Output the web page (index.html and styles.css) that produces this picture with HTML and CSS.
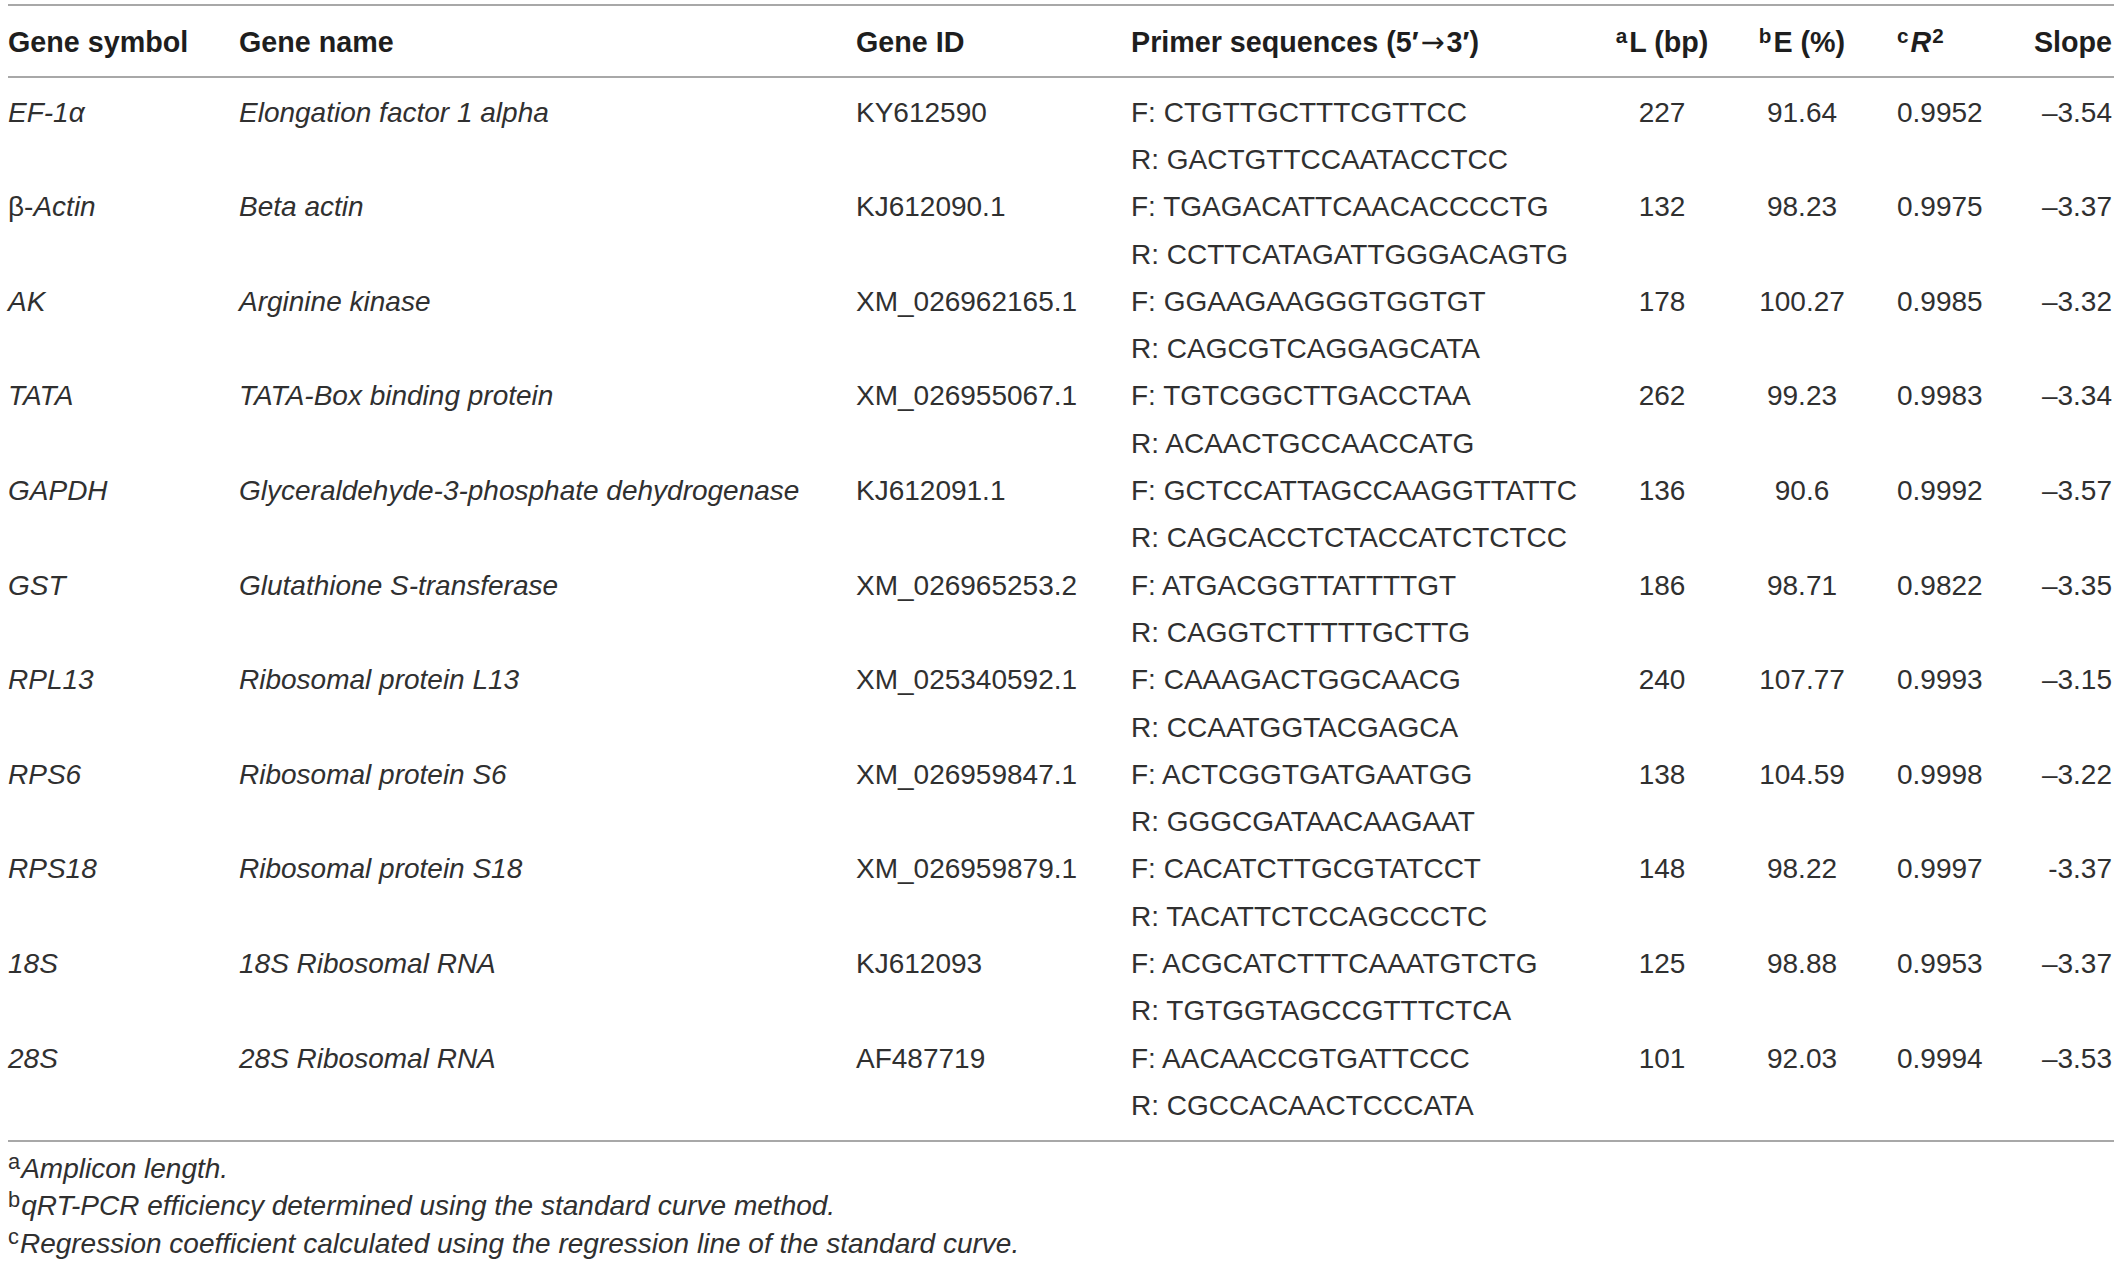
FILE: index.html
```html
<!DOCTYPE html>
<html>
<head>
<meta charset="utf-8">
<link rel="stylesheet" href="styles.css">
</head>
<body>
<div class="tbl">
  <div class="row head">
    <div class="c">Gene symbol</div>
    <div class="c">Gene name</div>
    <div class="c">Gene ID</div>
    <div class="c">Primer sequences (5′<span class="arr">→</span>3′)</div>
    <div class="c ctr"><sup>a</sup>L (bp)</div>
    <div class="c ctr"><sup>b</sup>E (%)</div>
    <div class="c r2"><sup>c</sup><i>R</i><sup class="sq">2</sup></div>
    <div class="c rt">Slope</div>
  </div>
  <div class="body">
    <div class="row"><div class="c it">EF-1α</div><div class="c it">Elongation factor 1 alpha</div><div class="c">KY612590</div><div class="c">F: CTGTTGCTTTCGTTCC<br>R: GACTGTTCCAATACCTCC</div><div class="c ctr">227</div><div class="c ctr">91.64</div><div class="c r2">0.9952</div><div class="c rt">–3.54</div></div>
    <div class="row"><div class="c">β-<i>Actin</i></div><div class="c it">Beta actin</div><div class="c">KJ612090.1</div><div class="c">F: TGAGACATTCAACACCCCTG<br>R: CCTTCATAGATTGGGACAGTG</div><div class="c ctr">132</div><div class="c ctr">98.23</div><div class="c r2">0.9975</div><div class="c rt">–3.37</div></div>
    <div class="row"><div class="c it">AK</div><div class="c it">Arginine kinase</div><div class="c">XM_026962165.1</div><div class="c">F: GGAAGAAGGGTGGTGT<br>R: CAGCGTCAGGAGCATA</div><div class="c ctr">178</div><div class="c ctr">100.27</div><div class="c r2">0.9985</div><div class="c rt">–3.32</div></div>
    <div class="row"><div class="c it">TATA</div><div class="c it">TATA-Box binding protein</div><div class="c">XM_026955067.1</div><div class="c">F: TGTCGGCTTGACCTAA<br>R: ACAACTGCCAACCATG</div><div class="c ctr">262</div><div class="c ctr">99.23</div><div class="c r2">0.9983</div><div class="c rt">–3.34</div></div>
    <div class="row"><div class="c it">GAPDH</div><div class="c it">Glyceraldehyde-3-phosphate dehydrogenase</div><div class="c">KJ612091.1</div><div class="c">F: GCTCCATTAGCCAAGGTTATTC<br>R: CAGCACCTCTACCATCTCTCC</div><div class="c ctr">136</div><div class="c ctr">90.6</div><div class="c r2">0.9992</div><div class="c rt">–3.57</div></div>
    <div class="row"><div class="c it">GST</div><div class="c it">Glutathione S-transferase</div><div class="c">XM_026965253.2</div><div class="c">F: ATGACGGTTATTTTGT<br>R: CAGGTCTTTTTGCTTG</div><div class="c ctr">186</div><div class="c ctr">98.71</div><div class="c r2">0.9822</div><div class="c rt">–3.35</div></div>
    <div class="row"><div class="c it">RPL13</div><div class="c it">Ribosomal protein L13</div><div class="c">XM_025340592.1</div><div class="c">F: CAAAGACTGGCAACG<br>R: CCAATGGTACGAGCA</div><div class="c ctr">240</div><div class="c ctr">107.77</div><div class="c r2">0.9993</div><div class="c rt">–3.15</div></div>
    <div class="row"><div class="c it">RPS6</div><div class="c it">Ribosomal protein S6</div><div class="c">XM_026959847.1</div><div class="c">F: ACTCGGTGATGAATGG<br>R: GGGCGATAACAAGAAT</div><div class="c ctr">138</div><div class="c ctr">104.59</div><div class="c r2">0.9998</div><div class="c rt">–3.22</div></div>
    <div class="row"><div class="c it">RPS18</div><div class="c it">Ribosomal protein S18</div><div class="c">XM_026959879.1</div><div class="c">F: CACATCTTGCGTATCCT<br>R: TACATTCTCCAGCCCTC</div><div class="c ctr">148</div><div class="c ctr">98.22</div><div class="c r2">0.9997</div><div class="c rt">-3.37</div></div>
    <div class="row"><div class="c it">18S</div><div class="c it">18S Ribosomal RNA</div><div class="c">KJ612093</div><div class="c">F: ACGCATCTTTCAAATGTCTG<br>R: TGTGGTAGCCGTTTCTCA</div><div class="c ctr">125</div><div class="c ctr">98.88</div><div class="c r2">0.9953</div><div class="c rt">–3.37</div></div>
    <div class="row"><div class="c it">28S</div><div class="c it">28S Ribosomal RNA</div><div class="c">AF487719</div><div class="c">F: AACAACCGTGATTCCC<br>R: CGCCACAACTCCCATA</div><div class="c ctr">101</div><div class="c ctr">92.03</div><div class="c r2">0.9994</div><div class="c rt">–3.53</div></div>
  </div>
  <div class="notes">
    <p><sup>a</sup><i>Amplicon length.</i></p>
    <p><sup>b</sup><i>qRT-PCR efficiency determined using the standard curve method.</i></p>
    <p><sup>c</sup><i>Regression coefficient calculated using the regression line of the standard curve.</i></p>
  </div>
</div>
</body>
</html>
```
FILE: styles.css
```css
html, body {
  margin: 0;
  padding: 0;
  background: #ffffff;
}
body {
  font-family: "Liberation Sans", Arial, sans-serif;
  font-size: 28px;
  color: #303030;
}
.tbl {
  margin-left: 8px;
  width: 2106px;
  padding-top: 4px;
}
.row {
  display: grid;
  grid-template-columns: 231px 617px 275px 467px 128px 152px 130px 106px;
  line-height: 47.3px;
}
.head {
  border-top: 2px solid #a8a8a8;
  border-bottom: 2px solid #a8a8a8;
  padding-top: 12.7px;
  padding-bottom: 10px;
  font-weight: bold;
  font-size: 28.7px;
  line-height: 47.3px;
  color: #1e1e1e;
}
.arr {
  font-family: "DejaVu Sans", sans-serif;
  font-weight: normal;
  margin: 0 2px;
}
.body {
  padding-top: 10.7px;
  padding-bottom: 10.7px;
  border-bottom: 2px solid #a8a8a8;
}
.c {
  white-space: nowrap;
}
.it {
  font-style: italic;
}
.ctr {
  text-align: center;
}
.r2 {
  padding-left: 19px;
}
.rt {
  text-align: right;
  padding-right: 2px;
}
sup {
  font-size: 0.72em;
  line-height: 0;
  vertical-align: 0.42em;
  margin-right: 2px;
}
.sq {
  margin-left: 1px;
}
.notes {
  padding-top: 8px;
}
.notes p {
  margin: 0;
  line-height: 37.5px;
}
.notes sup {
  font-size: 0.78em;
  vertical-align: 0.4em;
  margin-right: 1px;
}
```
